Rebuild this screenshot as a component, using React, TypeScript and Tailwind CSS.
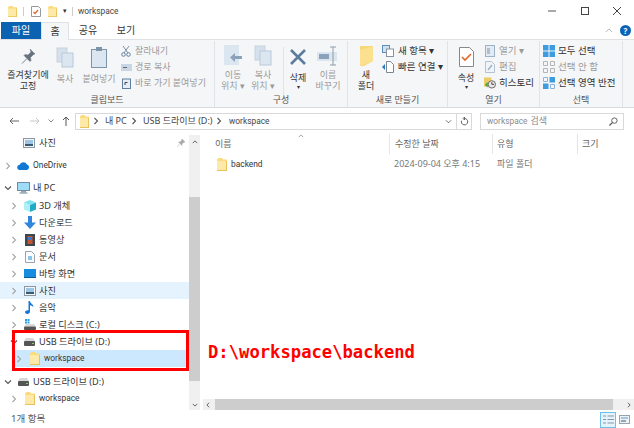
import type { ReactNode } from "react";

// Latin labels in the shot are much narrower than the Korean ones around them
const latin = "text-[8.4px] font-['Roboto',sans-serif]";

function Folder({ className = "w-[10px] h-[13px]" }: { className?: string }) {
  return (
    <svg viewBox="0 0 10 13" className={className} preserveAspectRatio="none">
      <path d="M0 1.5 1.5 0H5l1 1.5h4V13H0z" fill="#fbdc7c" />
      <path d="M0 3h10v10H0z" fill="#fde9a8" />
      <path d="M0 12h10v1H0zM9 3h1v10H9z" fill="#eac25c" />
    </svg>
  );
}

function Chevron({ open = false, dark = false }: { open?: boolean; dark?: boolean }) {
  return (
    <svg viewBox="0 0 8 8" className="w-[8px] h-[8px] shrink-0">
      <path d={open ? "M1 2.5 4 5.5 7 2.5" : "M2.5 1 5.5 4 2.5 7"} fill="none" stroke={open || dark ? "#555" : "#a6a6a6"} strokeWidth="1.1" />
    </svg>
  );
}

function Drive() {
  return (
    <svg viewBox="0 0 11 8" className="w-[11px] h-[8px]">
      <path d="M2 0h7l2 3H0z" fill="#d8d8d8" />
      <rect y="3" width="11" height="5" rx="1" fill="#555" />
      <rect x="8" y="5" width="2" height="1" fill="#7fd46a" />
    </svg>
  );
}

function Photo() {
  return (
    <svg viewBox="0 0 12 10" className="w-[12px] h-[10px]">
      <rect x=".5" y=".5" width="11" height="9" fill="#f3f6f8" stroke="#8b98a3" />
      <path d="M2 6h8v2H2z" fill="#3c5a6e" />
      <path d="M2 2h8v4H2z" fill="#9ec6e4" />
    </svg>
  );
}

function NavIcon({ kind }: { kind: string }) {
  if (kind === "photo") return <Photo />;
  if (kind === "folder") return <Folder />;
  if (kind === "drive") return <Drive />;
  if (kind === "cloud")
    return (
      <svg viewBox="0 0 13 8" className="w-[13px] h-[8px]">
        <path d="M3 8a2.6 2.6 0 0 1-.4-5.2A4 4 0 0 1 10 2.600a2.800 2.800 0 0 1 0 5.400z" fill="#0f78d4" />
      </svg>
    );
  if (kind === "pc")
    return (
      <svg viewBox="0 0 13 12" className="w-[13px] h-[12px]">
        <rect x=".5" y=".5" width="12" height="8" fill="#9fdcf8" stroke="#6d8ea3" />
        <path d="M4 9h5v1.500H4z" fill="#9aa7b0" />
        <path d="M2.500 10.500h8v1h-8z" fill="#6f8796" />
      </svg>
    );
  if (kind === "cube")
    return (
      <svg viewBox="0 0 12 12" className="w-[12px] h-[12px]">
        <path d="M6 0 12 2.500 6 5 0 2.500z" fill="#7fe3f0" />
        <path d="M0 2.500 6 5v7L0 9.500z" fill="#aef0f5" />
        <path d="M12 2.500 6 5v7l6-2.500z" fill="#21a9c9" />
      </svg>
    );
  if (kind === "down")
    return (
      <svg viewBox="0 0 12 13" className="w-[12px] h-[13px]">
        <path d="M4 0h4v6.500h4L6 13 0 6.500h4z" fill="#2f86dc" />
      </svg>
    );
  if (kind === "video")
    return (
      <svg viewBox="0 0 10 12" className="w-[10px] h-[12px]">
        <rect width="10" height="12" fill="#3d4750" />
        <rect x="2.500" y="2" width="5" height="8" fill="#c2562f" />
        <rect x="3" y="3" width="4" height="3" fill="#3f77c9" />
      </svg>
    );
  if (kind === "doc")
    return (
      <svg viewBox="0 0 10 12" className="w-[10px] h-[12px]">
        <path d="M.5.500h6l3 3v8h-9z" fill="#fbfcfd" stroke="#9aa4ad" />
        <rect x="3" y="5" width="4" height="4" fill="#8ec3ea" />
      </svg>
    );
  if (kind === "desktop")
    return (
      <svg viewBox="0 0 12 9" className="w-[12px] h-[9px]">
        <rect width="12" height="9" fill="#1a8ce0" />
        <rect y="8" width="12" height="1" fill="#0b5c9e" />
      </svg>
    );
  if (kind === "music")
    return (
      <svg viewBox="0 0 9 13" className="w-[9px] h-[13px]">
        <path d="M3.500 0h1.300c.3 2.500 4 3 3.500 6.500C7.800 5 6 4.300 5 4.200V10.500C5 12.200 3.600 13 2.300 13 1 13 0 12.300 0 11.100 0 9.800 1.500 9 3.500 9.200z" fill="#1578d8" />
      </svg>
    );
  // local disk
  return (
    <svg viewBox="0 0 12 11" className="w-[12px] h-[11px]">
      <rect x="1" width="2" height="2" fill="#2aa0e6" />
      <rect x="3.500" width="2" height="2" fill="#2aa0e6" />
      <rect x="1" y="2.500" width="2" height="2" fill="#2aa0e6" />
      <rect x="3.500" y="2.500" width="2" height="2" fill="#2aa0e6" />
      <path d="M2 5h8l2 2.500H0z" fill="#d8d8d8" />
      <rect y="7.500" width="12" height="3.500" rx="1" fill="#555" />
    </svg>
  );
}

function NavRow({ pad, icon, label, open = false, bg = "", text = "" }: { pad: string; icon: string; label: string; open?: boolean; bg?: string; text?: string }) {
  return (
    <div className={`flex items-center h-[17px] ${pad} ${bg}`}>
      <Chevron open={open} />
      <span className="ml-[4px] w-[15px] flex items-center justify-center shrink-0"><NavIcon kind={icon} /></span>
      <span className={`ml-[2px] whitespace-nowrap text-[#333] ${text}`}>{label}</span>
    </div>
  );
}

function BigButton({ width, lines, icon, muted = false, caret = false }: { width: string; lines: string[]; icon: ReactNode; muted?: boolean; caret?: boolean }) {
  return (
    <div className={`flex flex-col items-center shrink-0 ${width}`}>
      <div className="h-[25px] flex items-center justify-center mt-[4px]">{icon}</div>
      <div className={`mt-[3px] text-center leading-[11px] whitespace-nowrap ${muted ? "text-[#9a9a9a]" : "text-[#333]"}`}>
        {lines.map((l) => <div key={l}>{l}</div>)}
        {caret && <div className="text-[6px] leading-[8px]">▾</div>}
      </div>
    </div>
  );
}

function SmallRow({ icon, label, muted = false, gap = "gap-[3px]" }: { icon: ReactNode; label: string; muted?: boolean; gap?: string }) {
  return (
    <div className={`flex items-center h-[16px] whitespace-nowrap ${gap} ${muted ? "text-[#9a9a9a]" : "text-[#333]"}`}>
      <span className="w-[12px] flex justify-center shrink-0">{icon}</span>
      <span>{label}</span>
    </div>
  );
}

function Group({ width, label, children }: { width: string; label: string; children: ReactNode }) {
  return (
    <div className={`flex flex-col shrink-0 border-r border-[#e1e3e6] ${width}`}>
      <div className="flex-1 flex min-h-0">{children}</div>
      <div className="h-[16px] text-center leading-[18px] text-[#555]">{label}</div>
    </div>
  );
}

const paleDoc = (
  <svg viewBox="0 0 18 21" className="w-[18px] h-[21px]">
    <rect x="1" y="1" width="10" height="14" fill="#d5e0ec" stroke="#c6d2de" />
    <rect x="6" y="6" width="11" height="14" fill="#dce6f1" stroke="#b9c9d9" />
  </svg>
);

export default function App() {
  return (
    <div className="w-[634px] h-[428px] overflow-hidden bg-white relative flex flex-col text-[9.5px] font-['Noto_Sans','Noto_Sans_CJK_KR',sans-serif]">
      {/* title bar */}
      <div className="h-[22px] flex items-center shrink-0 pl-[8px]">
        <Folder className="w-[9px] h-[11px]" />
        <span className="ml-[6px] w-px h-[9px] bg-[#ccc]" />
        <svg viewBox="0 0 10 11" className="w-[10px] h-[11px] ml-[7px]">
          <path d="M.5.500h7l2 2v8h-9z" fill="#fff" stroke="#999" />
          <path d="M2.500 6 4 7.500 7 4" fill="none" stroke="#e0662c" strokeWidth="1.200" />
        </svg>
        <Folder className="w-[9px] h-[11px] ml-[7px]" />
        <span className="ml-[6px] text-[#333] text-[7px]">▾</span>
        <span className="ml-[5px] w-px h-[9px] bg-[#ccc]" />
        <span className={`ml-[5px] text-[#444] ${latin}`}>workspace</span>
        <div className="ml-auto flex items-center gap-[22.5px] pr-[12px]">
          <svg viewBox="0 0 10 10" className="w-[10px] h-[10px]"><path d="M1 5h8" stroke="#555" /></svg>
          <svg viewBox="0 0 10 10" className="w-[10px] h-[10px]"><rect x="1.500" y="1.500" width="7" height="7" fill="none" stroke="#444" /></svg>
          <svg viewBox="0 0 10 10" className="w-[10px] h-[10px]"><path d="M1 1l8 8M9 1 1 9" stroke="#444" /></svg>
        </div>
      </div>

      {/* tabs */}
      <div className="h-[18px] flex items-stretch shrink-0 pl-[1px] pr-[3px] text-[10px] border-b border-[#dfe1e4]">
        <div className="w-[40px] bg-[#0b62b0] text-white flex items-center justify-center">파일</div>
        <div className="w-[28px] bg-[#f5f6f7] border-x border-t border-[#dfe1e4] -mb-px flex items-center justify-center text-[#333]">홈</div>
        <div className="w-[38px] flex items-center justify-center text-[#333]">공유</div>
        <div className="w-[38px] flex items-center justify-center text-[#333]">보기</div>
        <div className="ml-auto flex items-center gap-[7px]">
          <svg viewBox="0 0 10 6" className="w-[8px] h-[5px]"><path d="M1 5 5 1l4 4" fill="none" stroke="#aaa" /></svg>
          <div className="w-[11px] h-[11px] rounded-full bg-[#0a63b8] text-white font-bold text-[8px] leading-[11px] text-center">?</div>
        </div>
      </div>

      {/* ribbon */}
      <div className="h-[68px] shrink-0 flex bg-[#f5f6f7] border-b border-[#dadbdc] pt-[1px] text-[9px]">
        <Group width="w-[215px]" label="클립보드">
          <BigButton width="w-[52px] ml-[2px]" lines={["즐겨찾기에", "고정"]} icon={
            <svg viewBox="0 0 16 16" className="w-[16px] h-[16px]"><path d="M10 1l5 5-1.500.5-3 3 .5 3-1 1-3-3-5 5 5-5-3-3 1-1 3 .5 3-3z" fill="#67727d" stroke="#67727d" strokeWidth=".5" /></svg>
          } />
          <BigButton width="w-[22px]" muted lines={["복사"]} icon={paleDoc} />
          <BigButton width="w-[38px] ml-[4px]" muted lines={["붙여넣기"]} icon={
            <svg viewBox="0 0 16 21" className="w-[16px] h-[21px]"><rect x=".5" y="2.500" width="15" height="18" fill="#dce6f1" stroke="#7d93a8" /><rect x="5" y="0" width="6" height="4" fill="#7d93a8" /></svg>
          } />
          <div className="flex flex-col pt-[2px] ml-[2px]">
            <SmallRow muted label="잘라내기" icon={<svg viewBox="0 0 10 12" className="w-[10px] h-[12px]"><path d="M2 1l5 7M8 1 3 8" stroke="#7d93a8" /><circle cx="2.500" cy="9.500" r="1.800" fill="none" stroke="#5f7f9f" /><circle cx="7.500" cy="9.500" r="1.800" fill="none" stroke="#5f7f9f" /></svg>} />
            <SmallRow muted label="경로 복사" icon={<svg viewBox="0 0 11 7" className="w-[11px] h-[7px]"><rect width="11" height="7" fill="#c9d6e3" /><path d="M2 3.500h4" stroke="#667" /></svg>} />
            <SmallRow muted label="바로 가기 붙여넣기" icon={<svg viewBox="0 0 9 11" className="w-[9px] h-[11px]"><rect x=".5" y="1" width="8" height="9.500" fill="#e6edf4" stroke="#5f7f9f" /><path d="M3 7V4.500h2.500" fill="none" stroke="#345" /></svg>} />
          </div>
        </Group>
        <Group width="w-[133px]" label="구성">
          <BigButton width="w-[30px] ml-[3px]" muted lines={["이동", "위치 ▾"]} icon={
            <svg viewBox="0 0 19 21" className="w-[19px] h-[21px]"><rect width="15" height="20" fill="#dce6f1" /><path d="M18 11h-7V8l-5 4.500 5 4.500v-3h7z" fill="#8aa3bb" /></svg>
          } />
          <BigButton width="w-[30px]" muted lines={["복사", "위치 ▾"]} icon={paleDoc} />
          <span className="w-px h-[50px] mt-[6px] ml-[5px] bg-[#e1e3e6]" />
          <BigButton width="w-[28px]" lines={["삭제"]} caret icon={
            <svg viewBox="0 0 18 18" className="w-[18px] h-[18px]"><path d="M2 2l14 14M16 2 2 16" stroke="#5c7c9e" strokeWidth="2.600" /></svg>
          } />
          <BigButton width="w-[32px]" muted lines={["이름", "바꾸기"]} icon={
            <svg viewBox="0 0 22 20" className="w-[22px] h-[20px]"><rect y="6" width="20" height="9" fill="#dbe5ef" /><rect x="2" y="8" width="10" height="5" fill="#8aa3bb" /><path d="M13 1h6M16 1v18M13 19h6" stroke="#8f9ba7" fill="none" /></svg>
          } />
        </Group>
        <Group width="w-[100px]" label="새로 만들기">
          <BigButton width="w-[30px] ml-[3px]" lines={["새", "폴더"]} icon={
            <svg viewBox="0 0 13 20" className="w-[13px] h-[20px]"><path d="M0 0h13v15L4 20H0z" fill="#f8d775" /><path d="M0 20V4l13-4v15z" fill="#fbe08f" /></svg>
          } />
          <div className="flex flex-col pt-[2px] text-[9.5px] ml-[1px]">
            <SmallRow label="새 항목 ▾" gap="gap-[4px]" icon={<svg viewBox="0 0 12 12" className="w-[12px] h-[12px]"><rect x=".5" y=".5" width="7" height="7" fill="#cfe2f3" stroke="#5f8fb8" /><rect x="4.500" y="4" width="7" height="7.500" fill="#fff" stroke="#8a949e" /></svg>} />
            <SmallRow label="빠른 연결 ▾" gap="gap-[4px]" icon={<svg viewBox="0 0 12 12" className="w-[12px] h-[12px]"><path d="M4.500.500h4l3 3v8h-7z" fill="#fff" stroke="#7d8790" /><path d="M0 6l3-3v6z" fill="#2a78c8" /></svg>} />
          </div>
        </Group>
        <Group width="w-[92px]" label="열기">
          <BigButton width="w-[30px] ml-[3px]" lines={["속성"]} caret icon={
            <svg viewBox="0 0 15 20" className="w-[15px] h-[20px]"><path d="M.5.500h10l4 4v15H.5z" fill="#fff" stroke="#888" /><path d="M3 10l3 3 6-6" fill="none" stroke="#e2652a" strokeWidth="1.600" /></svg>
          } />
          <div className="flex flex-col pt-[2px] ml-[3px] text-[9.5px]">
            <SmallRow muted label="열기 ▾" icon={<svg viewBox="0 0 10 12" className="w-[10px] h-[12px]"><rect x=".5" y=".5" width="9" height="11" fill="#e2ebf3" stroke="#9db2c6" /><path d="M2 4h3M2 6h3M2 8h3" stroke="#7d93a8" /></svg>} />
            <SmallRow muted label="편집" icon={<svg viewBox="0 0 10 12" className="w-[10px] h-[12px]"><path d="M.5.500h6l3 3v8h-9z" fill="#f2f5f8" stroke="#b4c3d1" /><path d="M3 9l4-5" stroke="#9db2c6" strokeWidth="1.500" /></svg>} />
            <SmallRow label="히스토리" icon={<svg viewBox="0 0 13 12" className="w-[13px] h-[12px]"><path d="M0 0h8v10H0z" fill="#eccc66" /><circle cx="8.500" cy="7.500" r="4" fill="#e8e8e8" stroke="#666" /><path d="M8.500 5v2.500H11" fill="none" stroke="#444" /><path d="M1 8l3-3v6z" fill="#3aa83a" /></svg>} />
          </div>
        </Group>
        <Group width="w-[83px]" label="선택">
          <div className="flex flex-col pt-[2px] ml-[3px] text-[9.5px]">
            <SmallRow label="모두 선택" icon={<svg viewBox="0 0 12 12" className="w-[12px] h-[12px]"><path d="M0 0h5.500v5.500H0zM6.500 0H12v5.500H6.500zM0 6.500h5.500V12H0zM6.500 6.500H12V12H6.500z" fill="#3d9be0" /></svg>} />
            <SmallRow muted label="선택 안 함" icon={<svg viewBox="0 0 12 12" className="w-[12px] h-[12px]"><path d="M.5.500h4v4h-4zM7.500.500h4v4h-4zM.5 7.500h4v4h-4zM7.500 7.500h4v4h-4z" fill="none" stroke="#b5b5b5" /></svg>} />
            <SmallRow label="선택 영역 반전" icon={<svg viewBox="0 0 12 12" className="w-[12px] h-[12px]"><path d="M6.500 0H12v5.500H6.500zM0 6.500h5.500V12H0z" fill="#3d9be0" /><path d="M.5.500h4v4h-4zM7.500 7.500h4v4h-4z" fill="none" stroke="#8ab4d8" /></svg>} />
          </div>
        </Group>
      </div>

      {/* address row */}
      <div className="h-[25px] shrink-0 flex items-center text-[9px] text-[#444] pl-[9px] pt-[1px]">
        <svg viewBox="0 0 10 8" className="w-[10px] h-[8px]"><path d="M10 4H1M4 1 1 4l3 3" fill="none" stroke="#666" /></svg>
        <svg viewBox="0 0 10 8" className="w-[10px] h-[8px] ml-[11px]"><path d="M0 4h9M6 1l3 3-3 3" fill="none" stroke="#c8c8c8" /></svg>
        <svg viewBox="0 0 6 4" className="w-[6px] h-[4px] ml-[8px]"><path d="M.5.500 3 3 5.500.500" fill="none" stroke="#888" /></svg>
        <svg viewBox="0 0 8 10" className="w-[8px] h-[10px] ml-[8px]"><path d="M4 10V1M1 4l3-3 3 3" fill="none" stroke="#555" /></svg>
        <div className="ml-[5px] w-[397px] h-[17px] border border-[#d9d9d9] flex items-center pl-[4px] shrink-0">
          <Folder className="w-[9px] h-[13px]" />
          <span className="ml-[3px] mr-[5px]"><Chevron dark /></span>
          <span className="w-[25px] whitespace-nowrap">내 PC</span>
          <Chevron dark />
          <span className="ml-[5px] w-[72px] whitespace-nowrap">USB 드라이브 (D:)</span>
          <Chevron dark />
          <span className={`ml-[6px] ${latin}`}>workspace</span>
          <div className="ml-auto flex items-center h-full">
            <svg viewBox="0 0 8 5" className="w-[7px] h-[5px] mr-[4px]"><path d="M1 1l3 3 3-3" fill="none" stroke="#666" /></svg>
            <div className="w-[15px] h-full border-l border-[#d9d9d9] flex items-center justify-center">
              <svg viewBox="0 0 9 9" className="w-[9px] h-[9px]"><path d="M4.500 1.500a3.200 3.200 0 1 1-3 2.200M4.500 0v3L3 1.500z" fill="none" stroke="#666" /></svg>
            </div>
          </div>
        </div>
        <div className="ml-[8px] w-[144px] h-[17px] border border-[#d9d9d9] flex items-center pl-[6px] pr-[5px] text-[#8a8a8a] shrink-0">
          <span className={latin}>workspace</span>
          <span className="ml-[3px]">검색</span>
          <svg viewBox="0 0 10 10" className="w-[9px] h-[9px] ml-auto"><circle cx="6" cy="4" r="3" fill="none" stroke="#555" /><path d="M4 6 .5 9.500" stroke="#555" strokeWidth="1.400" /></svg>
        </div>
      </div>

      {/* main */}
      <div className="flex-1 min-h-0 flex items-stretch pb-[1px] text-[9.2px]">
        <div className="w-[189px] shrink-0 pt-[1px]">
          <div className="flex items-center h-[17px] pl-[23px]">
            <Photo />
            <span className="ml-[4px] text-[#333]">사진</span>
            <svg viewBox="0 0 8 8" className="w-[8px] h-[8px] ml-auto mr-[4px]"><path d="M5 0l3 3-1.500.5L5 5v1.500L1.500 3H3l1.500-1.500zM2.500 5 0 8" fill="#a9a9a9" stroke="#a9a9a9" strokeWidth=".5" /></svg>
          </div>
          <div className="h-[6px]" />
          <NavRow pad="pl-[4px]" icon="cloud" label="OneDrive" text={latin} />
          <div className="h-[5px]" />
          <NavRow pad="pl-[4px]" icon="pc" label="내 PC" open />
          <div className="h-[1px]" />
          <NavRow pad="pl-[10px]" icon="cube" label="3D 개체" />
          <NavRow pad="pl-[10px]" icon="down" label="다운로드" />
          <NavRow pad="pl-[10px]" icon="video" label="동영상" />
          <NavRow pad="pl-[10px]" icon="doc" label="문서" />
          <NavRow pad="pl-[10px]" icon="desktop" label="바탕 화면" />
          <NavRow pad="pl-[10px]" icon="photo" label="사진" bg="bg-[#e5f3ff]" />
          <NavRow pad="pl-[10px]" icon="music" label="음악" />
          <NavRow pad="pl-[10px]" icon="disk" label="로컬 디스크 (C:)" />
          <NavRow pad="pl-[10px]" icon="drive" label="USB 드라이브 (D:)" open />
          <NavRow pad="ml-[12px] pl-[3px]" icon="folder" label="workspace" bg="bg-[#cce8ff]" text={latin} />
          <div className="h-[6px]" />
          <NavRow pad="pl-[4px]" icon="drive" label="USB 드라이브 (D:)" open />
          <NavRow pad="pl-[10px]" icon="folder" label="workspace" text={latin} />
        </div>

        {/* nav scrollbar */}
        <div className="w-[11px] shrink-0 mt-[2px] bg-[#f0f0f0] flex flex-col items-center">
          <div className="h-[14px] flex items-center">
            <svg viewBox="0 0 8 5" className="w-[6px] h-[4px]"><path d="M1 4l3-3 3 3" fill="none" stroke="#555" strokeWidth="1.200" /></svg>
          </div>
          <div className="h-[48px]" />
          <div className="w-full h-[184px] bg-[#cdcdcd]" />
          <div className="flex-1 flex items-end pb-[3px]">
            <svg viewBox="0 0 8 5" className="w-[6px] h-[4px]"><path d="M1 1l3 3 3-3" fill="none" stroke="#555" strokeWidth="1.200" /></svg>
          </div>
        </div>

        {/* file list */}
        <div className="flex-1 min-w-0 ml-[3px] flex flex-col text-[9px]">
          <div className="h-[22px] flex items-center text-[#666] relative">
            <span className="w-[186px] pl-[12px]">이름</span>
            <span className="w-[103px] pl-[5px] border-l border-[#e5e5e5] h-[20px] leading-[20px]">수정한 날짜</span>
            <span className="w-[85px] pl-[4px] border-l border-[#e5e5e5] h-[20px] leading-[20px]">유형</span>
            <span className="pl-[4px] border-l border-[#e5e5e5] h-[20px] leading-[20px]">크기</span>
            <svg viewBox="0 0 8 5" className="absolute left-[95px] top-[1px] w-[6px] h-[4px]"><path d="M1 4l3-3 3 3" fill="none" stroke="#888" /></svg>
          </div>
          <div className="h-[18px] flex items-center">
            <span className="w-[186px] pl-[14px] flex items-center gap-[4px] text-[#333]">
              <Folder />
              <span className={latin}>backend</span>
            </span>
            <span className="w-[103px] pl-[5px] text-[#777] whitespace-nowrap">2024-09-04 오후 4:15</span>
            <span className="pl-[5px] text-[#777]">파일 폴더</span>
          </div>
          <div className="flex-1" />
          {/* horizontal scrollbar */}
          <div className="h-[11px] bg-[#f0f0f0] flex items-center">
            <svg viewBox="0 0 5 8" className="w-[4px] h-[6px] ml-[3px] shrink-0"><path d="M4 1 1 4l3 3" fill="none" stroke="#555" strokeWidth="1.200" /></svg>
            <div className="ml-[5px] w-[398px] h-full bg-[#cdcdcd] shrink-0" />
            <svg viewBox="0 0 5 8" className="w-[4px] h-[6px] ml-auto mr-[3px] shrink-0"><path d="M1 1l3 3-3 3" fill="none" stroke="#555" strokeWidth="1.200" /></svg>
          </div>
        </div>
      </div>

      {/* status bar */}
      <div className="h-[17px] shrink-0 flex items-center pl-[11px] text-[9.5px] text-[#555]">
        1개 항목
        <div className="ml-auto flex items-center gap-[1px] pr-[4px]">
          <div className="w-[16px] h-[16px] border border-[#6cc0ea] bg-[#e5f3ff] flex items-center justify-center">
            <svg viewBox="0 0 11 9" className="w-[11px] h-[9px]"><path d="M0 1h3M4.500 1H11M0 4.500h3M4.500 4.500H11M0 8h3M4.500 8H11" stroke="#8a97a3" /></svg>
          </div>
          <svg viewBox="0 0 11 9" className="w-[11px] h-[9px] ml-[2px]"><rect x=".5" y=".5" width="10" height="8" fill="#eef2f5" stroke="#98a4ae" /><path d="M2 3h7" stroke="#5a9bd8" /><path d="M2 6h5" stroke="#3c5a6e" /></svg>
        </div>
      </div>

      {/* red annotation over the nav pane */}
      <div className="absolute left-[12px] top-[330px] w-[177px] h-[41px] border-[3px] border-[#ff0000]" />
      <div className="absolute left-[208px] top-[341px] text-[17.2px] leading-[22px] font-bold text-[#ff0000] font-['DejaVu_Sans_Mono',monospace] whitespace-nowrap">
        D:\workspace\backend
      </div>
    </div>
  );
}
